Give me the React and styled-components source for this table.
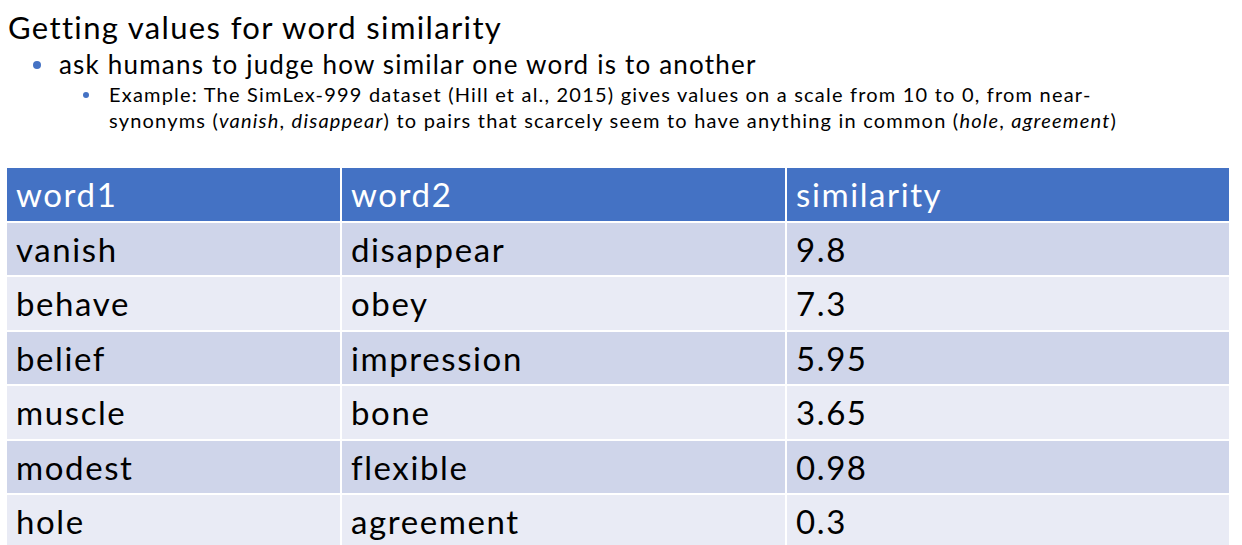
import React from 'react';
import styled, { createGlobalStyle } from 'styled-components';

const GlobalStyle = createGlobalStyle`
  html, body {
    margin: 0;
    padding: 0;
    background: #fff;
  }
  body {
    font-family: Lato, "Noto Sans", sans-serif;
    color: #000;
  }
`;

const Slide = styled.div`
  width: 1242px;
  height: 545px;
  overflow: hidden;
  display: flex;
  flex-direction: column;
`;

const Title = styled.h1`
  margin: 0;
  padding: 8px 0 0 8px;
  font-weight: 400;
  font-size: 31px;
  line-height: 38px;
  letter-spacing: 1.35px;
`;

const Bullets = styled.ul`
  list-style: none;
  margin: 0;
  padding: 0 0 0 ${(p) => p.$indent}px;
`;

const Item = styled.li`
  position: relative;
  margin-top: ${(p) => p.$top || 0}px;
  padding-left: ${(p) => p.$gap}px;
  font-size: ${(p) => p.$size}px;
  line-height: ${(p) => p.$lh}px;
  letter-spacing: ${(p) => p.$track}px;

  &::before {
    content: '';
    position: absolute;
    left: 0;
    top: ${(p) => p.$dotTop}px;
    width: ${(p) => p.$dot}px;
    height: ${(p) => p.$dot}px;
    border-radius: 50%;
    background: #4472c4;
  }
`;

const Table = styled.div`
  margin: 35px 0 0 7px;
  width: 1222px;
  display: grid;
  grid-template-columns: 333px 445px 444px;
  row-gap: 2px;
`;

const Row = styled.div`
  display: contents;
`;

const Cell = styled.div`
  height: 52.5px;
  display: flex;
  align-items: center;
  padding-left: 9px;
  font-size: 33px;
  letter-spacing: 1.6px;
  color: ${(p) => (p.$head ? '#fff' : '#000')};
  background: ${(p) => (p.$head ? '#4472c4' : p.$odd ? '#cfd5ea' : '#e9ebf5')};
  border-left: ${(p) => (p.$first ? 'none' : '2px solid #fff')};
`;

const rows = [
  ['vanish', 'disappear', '9.8'],
  ['behave', 'obey', '7.3'],
  ['belief', 'impression', '5.95'],
  ['muscle', 'bone', '3.65'],
  ['modest', 'flexible', '0.98'],
  ['hole', 'agreement', '0.3'],
];

export default function App() {
  return (
    <Slide>
      <GlobalStyle />
      <Title>Getting values for word similarity</Title>
      <Bullets $indent={33}>
        <Item $top={2} $gap={26} $size={26} $lh={32} $dot={8} $dotTop={13} $track={1.2}>
          ask humans to judge how similar one word is to another
          <Bullets $indent={24}>
            <Item $top={1} $gap={26} $size={20} $lh={26} $dot={6} $dotTop={11} $track={1.2}>
              Example: The SimLex-999 dataset (Hill et al., 2015) gives values on a scale from 10 to 0, from near-
              <br />
              synonyms (<i>vanish</i>, <i>disappear</i>) to pairs that scarcely seem to have anything in common (
              <i>hole</i>, <i>agreement</i>)
            </Item>
          </Bullets>
        </Item>
      </Bullets>
      <Table>
        <Row>
          <Cell $head $first>word1</Cell>
          <Cell $head>word2</Cell>
          <Cell $head>similarity</Cell>
        </Row>
        {rows.map((r, i) => (
          <Row key={r[0]}>
            <Cell $first $odd={i % 2 === 0}>{r[0]}</Cell>
            <Cell $odd={i % 2 === 0}>{r[1]}</Cell>
            <Cell $odd={i % 2 === 0}>{r[2]}</Cell>
          </Row>
        ))}
      </Table>
    </Slide>
  );
}
